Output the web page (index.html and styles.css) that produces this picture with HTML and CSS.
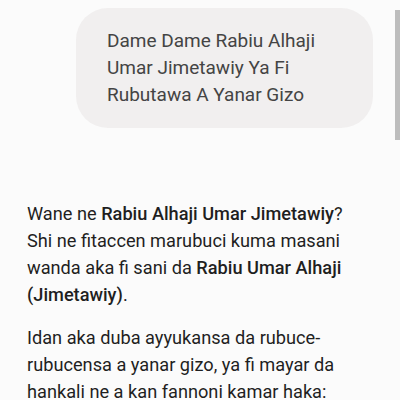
FILE: index.html
```
<!DOCTYPE html>
<html lang="ha">

<head>
    <meta charset="UTF-8" />
    <title>Rabiu Alhaji Umar Jimetawiy</title>
    <link rel="stylesheet" href="styles.css">
</head>

<body>
    <div class="scroll-thumb"></div>
    <div class="chat">
        <div class="bubble">
            Dame Dame Rabiu Alhaji Umar Jimetawiy Ya Fi Rubutawa A Yanar Gizo
        </div>
    </div>

    <div class="answer">
        <p>Wane ne <b>Rabiu Alhaji Umar Jimetawiy</b>? Shi ne fitaccen marubuci kuma masani wanda aka fi sani da <b>Rabiu Umar Alhaji (Jimetawiy)</b>.</p>
        <p>Idan aka duba ayyukansa da rubuce-rubucensa a yanar gizo, ya fi mayar da hankali ne a kan fannoni kamar haka:</p>
    </div>
</body>

</html>
```

FILE: styles.css
```
* {
    font-family: "Roboto", "Noto Sans", sans-serif;
}

body {
    margin: 0;
    padding: 0;
    background: #fbfbfb;
    color: #1f1f1f;
    overflow: hidden;
}

/* thumb of the page scrollbar */
.scroll-thumb {
    position: fixed;
    top: 10px;
    right: 0;
    width: 5px;
    height: 130px;
    background: #bdbdbd;
}

.chat {
    display: flex;
    justify-content: flex-end;
    padding: 8px 27px 0 0;
}

.bubble {
    width: 235px;
    padding: 19px 31px 20px;
    background: #f1efef;
    border-radius: 32px;
    font-size: 19px;
    line-height: 27px;
    color: #444;
}

.answer {
    padding: 72px 43px 0 27px;
}

.answer p {
    margin: 0 0 16px;
    font-size: 18.2px;
    line-height: 27px;
}

.answer b {
    font-weight: 500;
}
```
